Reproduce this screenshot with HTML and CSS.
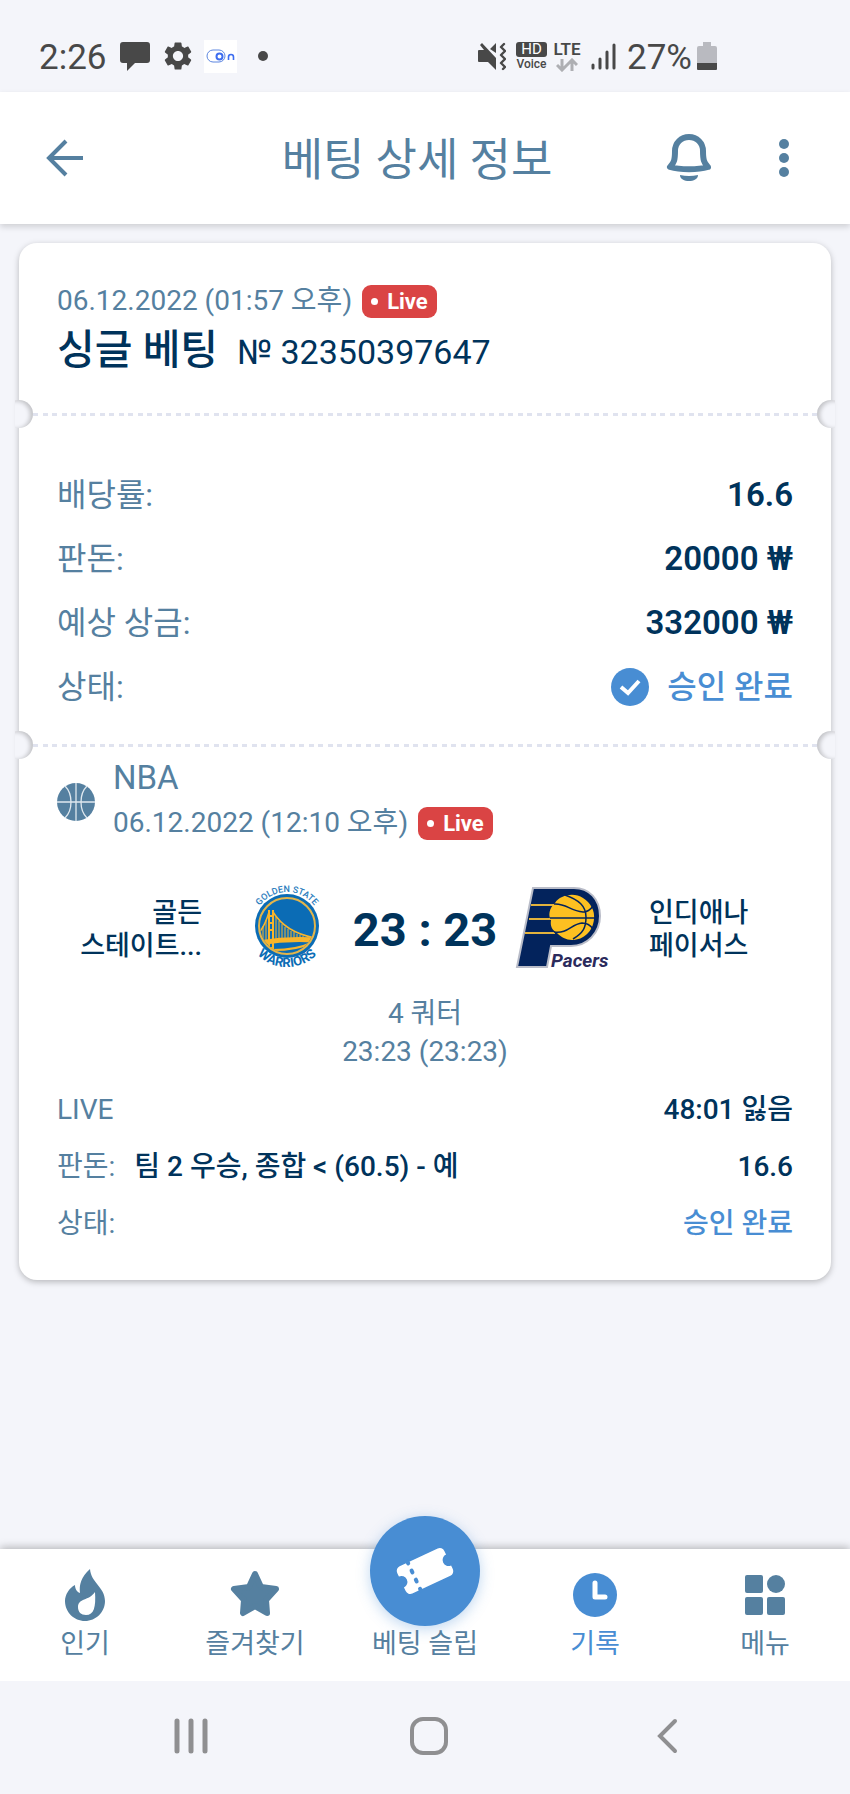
FILE: index.html
```html
<!DOCTYPE html>
<html lang="ko">
<head>
    <meta charset="UTF-8">
    <meta name="viewport" content="width=device-width, initial-scale=1">
    <title>베팅 상세 정보</title>
    <link rel="stylesheet" href="styles.css">
</head>
<body>
    <div class="status-bar">
        <div class="status-left">
            <span class="status-text">2:26</span>
            <svg class="icon-chat" width="30" height="30" viewBox="0 0 30 30"><path fill="#484848" d="M3 1h24a3 3 0 0 1 3 3v15a3 3 0 0 1-3 3H15l-8 8v-8H3a3 3 0 0 1-3-3V4a3 3 0 0 1 3-3z"/></svg>
            <svg class="icon-gear" width="34" height="34" viewBox="0 0 24 24"><path fill="#484848" d="M19.14 12.94c.04-.3.06-.61.06-.94 0-.32-.02-.64-.07-.94l2.03-1.58c.18-.14.23-.41.12-.61l-1.92-3.32c-.12-.22-.37-.29-.59-.22l-2.39.96c-.5-.38-1.03-.7-1.62-.94l-.36-2.54c-.04-.24-.24-.41-.48-.41h-3.84c-.24 0-.43.17-.47.41l-.36 2.54c-.59.24-1.13.57-1.62.94l-2.39-.96c-.22-.08-.47 0-.59.22L2.74 8.87c-.12.21-.08.47.12.61l2.03 1.58c-.05.3-.09.63-.09.94s.02.64.07.94l-2.03 1.58c-.18.14-.23.41-.12.61l1.92 3.32c.12.22.37.29.59.22l2.39-.96c.5.38 1.03.7 1.62.94l.36 2.54c.05.24.24.41.48.41h3.84c.24 0 .44-.17.47-.41l.36-2.54c.59-.24 1.13-.56 1.62-.94l2.39.96c.22.08.47 0 .59-.22l1.92-3.32c.12-.22.07-.47-.12-.61l-2.01-1.58zM12 15.6c-1.98 0-3.6-1.62-3.6-3.6s1.62-3.6 3.6-3.6 3.6 1.62 3.6 3.6-1.62 3.6-3.6 3.6z"/></svg>
            <svg class="icon-app" width="33" height="33" viewBox="0 0 33 33">
                <rect width="33" height="33" fill="#fff"/>
                <rect x="3" y="10" width="18" height="12" rx="6" fill="none" stroke="#5c86e0" stroke-width="1"/>
                <circle cx="15.500" cy="16.500" r="3" fill="none" stroke="#3d6df0" stroke-width="2"/>
                <path d="M24.500 20v-3a2.500 2.500 0 0 1 5 0v3" fill="none" stroke="#3d6df0" stroke-width="1.600"/>
            </svg>
            <span class="status-dot"></span>
        </div>
        <div class="status-right">
            <svg width="28" height="30" viewBox="0 0 28 30">
                <path fill="#484848" d="M1 9h5l-4-5 2-2 14 15v12l-8-8H1a1 1 0 0 1-1-1V10a1 1 0 0 1 1-1zM12 8l6-6v10z"/>
                <path fill="none" stroke="#484848" stroke-width="2.400" stroke-linecap="round" stroke-linejoin="round" d="M26 3l-3 3 4 4-4 4 4 4-4 4 4 4-2 2"/>
            </svg>
            <div class="hd-voice"><span class="hd">HD</span><span class="voice">Voice</span></div>
            <div class="lte">
                <span>LTE</span>
                <svg width="22" height="14" viewBox="0 0 22 14" fill="none" stroke="#aeafb3" stroke-width="3"><path d="M6 1v11M1 7l5 5 5-5M16 13V2M11 7l5-5 5 5"/></svg>
            </div>
            <svg width="26" height="28" viewBox="0 0 26 28" stroke="#484848" stroke-width="3" stroke-linecap="round"><path d="M2 23v3M9 17v9M16 10v16M23 3v23"/></svg>
            <span class="status-text battery-text">27%</span>
            <svg width="20" height="30" viewBox="0 0 20 30"><path fill="#b9bac0" d="M6 1h8v4h4a2 2 0 0 1 2 2v15H0V7a2 2 0 0 1 2-2h4z"/><path fill="#484848" d="M0 22h20v6a1 1 0 0 1-1 1H1a1 1 0 0 1-1-1z"/></svg>
        </div>
    </div>

    <header class="app-header">
        <button class="icon-button back-button" aria-label="뒤로">
            <svg width="40" height="40" viewBox="0 0 40 40" fill="none" stroke="#5580a0" stroke-width="4"><path d="M39 20H5M22 3L5 20l17 17"/></svg>
        </button>
        <h1>베팅 상세 정보</h1>
        <div class="header-actions">
            <button class="icon-button" aria-label="알림">
                <svg width="48" height="52" viewBox="0 0 48 52">
                    <path d="M24 5c-8 0-14 6-14 14c0 9-1 12-5 16c10 3 28 3 38 0c-4-4-5-7-5-16c0-8-6-14-14-14z" fill="none" stroke="#5580a0" stroke-width="6" stroke-linejoin="round"/>
                    <path d="M15 43q9 2 18 0c0 8-18 8-18 0z" fill="#5580a0"/>
                </svg>
            </button>
            <button class="icon-button" aria-label="더보기">
                <svg width="10" height="40" viewBox="0 0 10 40" fill="#5580a0"><circle cx="5" cy="6" r="5"/><circle cx="5" cy="20" r="5"/><circle cx="5" cy="34" r="5"/></svg>
            </button>
        </div>
    </header>

    <main>
        <article class="ticket">
            <section class="ticket-head">
                <div class="date-line">06.12.2022 (01:57 오후)<span class="live-badge">Live</span></div>
                <div class="title-line">
                    <h2>싱글 베팅</h2>
                    <span>№ 32350397647</span>
                </div>
            </section>

            <div class="divider"></div>

            <dl class="summary">
                <div><dt>배당률:</dt><dd>16.6</dd></div>
                <div><dt>판돈:</dt><dd>20000 ₩</dd></div>
                <div><dt>예상 상금:</dt><dd>332000 ₩</dd></div>
                <div>
                    <dt>상태:</dt>
                    <dd class="accepted">
                        <svg width="38" height="38" viewBox="0 0 38 38"><circle cx="19" cy="19" r="19" fill="#488dd3"/><path d="M10 19l7 6 11-12" fill="none" stroke="#fff" stroke-width="4"/></svg>
                        승인 완료
                    </dd>
                </div>
            </dl>

            <div class="divider"></div>

            <section class="match">
                <div class="league">
                    <svg width="38" height="38" viewBox="0 0 38 38">
                        <circle cx="19" cy="19" r="19" fill="#5580a0"/>
                        <path d="M19 0v38M0 19h38M8 3c8 8 8 24 0 32M30 3c-8 8-8 24 0 32" fill="none" stroke="#dfe8ef" stroke-width="1.300"/>
                    </svg>
                    <div>
                        <div class="league-name">NBA</div>
                        <div class="date-line">06.12.2022 (12:10 오후)<span class="live-badge">Live</span></div>
                    </div>
                </div>

                <div class="teams">
                    <div class="team-name home">골든 스테이트...</div>
                    <svg class="team-logo" width="66" height="82" viewBox="0 0 66 82">
                        <defs>
                            <path id="arc-top" d="M-1 39A34 34 0 0 1 67 39"/>
                            <path id="arc-bottom" d="M-9 38A42 42 0 0 0 75 38"/>
                            <clipPath id="disc"><circle cx="33" cy="39" r="27"/></clipPath>
                        </defs>
                        <circle cx="33" cy="39" r="32" fill="#0b6cb5"/>
                        <circle cx="33" cy="39" r="28" fill="#0b6cb5" stroke="#e3b54b" stroke-width="2"/>
                        <g clip-path="url(#disc)" stroke="#f9b52b" fill="none">
                            <path d="M15 23v42M19 23v42M15 29h4M15 36h4M15 43h4" stroke-width="2"/>
                            <path d="M19 25Q32 46 62 51M15 25Q11 39 4 47" stroke-width="1.500"/>
                            <path d="M22 30v23M25 34v19M28 37v16M31 40v13M34 42v11M37 44v9M40 45v8M43 47v6M46 48v5M49 49v3M12 33v20M9 39v14" stroke-width="1"/>
                            <path d="M4 56q29-5 58-3" stroke-width="5"/>
                            <path d="M19 63q24 0 38-7M4 61h15" stroke-width="2"/>
                        </g>
                        <text class="arc-golden"><textPath href="#arc-top" startOffset="50%">GOLDEN STATE</textPath></text>
                        <text class="arc-warriors"><textPath href="#arc-bottom" startOffset="50%">WARRIORS</textPath></text>
                    </svg>
                    <div class="score">23 : 23</div>
                    <svg class="team-logo" width="94" height="82" viewBox="0 0 94 82">
                        <path d="M17 1h41c15 0 26 11 26 28S71 59 55 59H35l-4 21H1z" fill="#03235c" stroke="#b9bcc8" stroke-width="2"/>
                        <path d="M15 18h25M13 32h25M9 46h30" stroke="#e2b23d" stroke-width="2"/>
                        <path d="M39 16C44 8 58 5 67 11c8 5 12 13 11 21c-1 12-10 21-22 21c-6 0-11-3-15-7c-5-3-7-7-6-13c-3-4-2-12 4-17z" fill="#fdc021"/>
                        <path d="M38 17c12-1 16 7 29 8c5 0 8-3 10-6M34 31h45M38 45c14 2 17-8 28-9c6 0 9 3 11 6M49 8c14 5 21 11 21 22s-3 16-13 22" fill="none" stroke="#03235c" stroke-width="1.500"/>
                        <text x="35" y="80" class="pacers-text">Pacers</text>
                    </svg>
                    <div class="team-name away">인디애나 페이서스</div>
                </div>

                <div class="period">4 쿼터<br>23:23 (23:23)</div>

                <dl class="event">
                    <div><dt>LIVE</dt><dd>48:01 잃음</dd></div>
                    <div><dt>판돈:</dt><dd class="pick">팀 2 우승, 종합 &lt; (60.5) - 예</dd><dd>16.6</dd></div>
                    <div><dt>상태:</dt><dd class="accepted">승인 완료</dd></div>
                </dl>
            </section>
        </article>
    </main>

    <nav class="bottom-nav">
        <a href="#">
            <svg width="52" height="52" viewBox="0 0 52 52">
                <path fill="#5580a0" fill-rule="evenodd" d="M31 0C22 8 20 16 21 24C18 23 16 20 16 16C10 19 6 26 6 32C6 43 15 52 26 52C37 52 46 43 46 32C46 18 32 14 31 0zM36 23C37 38 35 46 27 46C22 46 19 43 19 38C19 29 30 32 36 23z"/>
            </svg>
            <span>인기</span>
        </a>
        <a href="#">
            <svg width="52" height="52" viewBox="0 0 52 52"><path fill="#5580a0" stroke="#5580a0" stroke-width="6" stroke-linejoin="round" d="M26 5l6 13 15 2-10 11 1 13-12-7-12 7 1-13L5 20l15-2z"/></svg>
            <span>즐겨찾기</span>
        </a>
        <a href="#">
            <span class="slip-circle">
                <svg width="64" height="64" viewBox="-32 -32 64 64">
                    <g transform="rotate(-25)">
                        <path fill="#fff" d="M-21-15H21a5 5 0 0 1 5 5V-6a6 6 0 0 0 0 12V10a5 5 0 0 1-5 5H-21a5 5 0 0 1-5-5V6a6 6 0 0 0 0-12V-10a5 5 0 0 1 5-5z"/>
                        <path stroke="#488dd3" stroke-width="4" stroke-linecap="round" stroke-dasharray="2 8" d="M-12-16v34"/>
                    </g>
                </svg>
            </span>
            <span>베팅 슬립</span>
        </a>
        <a href="#" class="active">
            <svg width="52" height="52" viewBox="0 0 52 52"><circle cx="26" cy="26" r="22" fill="#488dd3"/><path d="M26 14v14h10" fill="none" stroke="#fff" stroke-width="5" stroke-linecap="round" stroke-linejoin="round"/></svg>
            <span>기록</span>
        </a>
        <a href="#">
            <svg width="52" height="52" viewBox="0 0 52 52" fill="#5580a0"><rect x="6" y="6" width="18" height="18" rx="2"/><circle cx="37" cy="15" r="9"/><rect x="6" y="28" width="18" height="18" rx="2"/><rect x="28" y="28" width="18" height="18" rx="2"/></svg>
            <span>메뉴</span>
        </a>
    </nav>

    <div class="system-bar">
        <button class="icon-button" aria-label="최근 앱"><svg width="36" height="38" viewBox="0 0 36 38" stroke="#8f8f91" stroke-width="5" stroke-linecap="round"><path d="M4 4v30M18 4v30M32 4v30"/></svg></button>
        <button class="icon-button" aria-label="홈"><svg width="38" height="38" viewBox="0 0 38 38"><rect x="2" y="2" width="34" height="34" rx="11" fill="none" stroke="#8f8f91" stroke-width="4"/></svg></button>
        <button class="icon-button" aria-label="이전"><svg width="22" height="38" viewBox="0 0 22 38" fill="none" stroke="#8f8f91" stroke-width="4" stroke-linecap="round" stroke-linejoin="miter"><path d="M19 4L4 19l15 15"/></svg></button>
    </div>
</body>
</html>
```
FILE: styles.css
```css
* {
    box-sizing: border-box;
}
body {
    font-family: Roboto, "Noto Sans CJK KR", sans-serif;
    background-color: #f4f5fa;
    color: #5580a0;
    display: flex;
    flex-direction: column;
    min-height: 100vh;
    margin: 0;
}
h1, h2, dl, dd {
    margin: 0;
}
svg {
    display: block;
    flex-shrink: 0;
}
.icon-button {
    display: flex;
    justify-content: center;
    align-items: center;
    width: 64px;
    height: 64px;
    padding: 0;
    border: none;
    background: none;
    cursor: pointer;
}

/* status bar */
.status-bar {
    display: flex;
    justify-content: space-between;
    height: 92px;
    padding: 20px 133px 0 39px;
    color: #484848;
}
.status-left, .status-right {
    display: flex;
    align-items: center;
}
.status-text {
    padding-top: 2px;
    font-size: 35px;
}
.icon-chat {
    margin-left: 13px;
}
.icon-gear {
    margin-left: 11px;
}
.icon-app {
    margin-left: 9px;
}
.status-dot {
    width: 10px;
    height: 10px;
    margin-left: 21px;
    border-radius: 50%;
    background-color: #484848;
}
.status-right {
    gap: 10px;
}
.hd-voice {
    display: flex;
    flex-direction: column;
    align-items: center;
    width: 31px;
}
.hd {
    width: 31px;
    border-radius: 3px;
    background-color: #484848;
    color: #fff;
    font-size: 15px;
    line-height: 15px;
    text-align: center;
}
.voice {
    font-size: 12px;
    line-height: 14px;
    font-weight: 500;
}
.lte {
    display: flex;
    flex-direction: column;
    align-items: center;
    width: 28px;
    margin-left: -4px;
    font-size: 17px;
    line-height: 17px;
    font-weight: 600;
}
.battery-text {
    margin-right: -5px;
}

/* header */
.app-header {
    display: grid;
    grid-template-columns: 177px 1fr 193px;
    align-items: center;
    height: 132px;
    background-color: #fff;
    box-shadow: 0 3px 6px rgba(0, 0, 0, 0.15);
}
.app-header h1 {
    padding-top: 6px;
    font-size: 45px;
    line-height: 60px;
    font-weight: 400;
    text-align: center;
    white-space: nowrap;
}
.back-button {
    margin-left: 32px;
}
.header-actions {
    display: flex;
    gap: 31px;
}

/* ticket */
main {
    flex: 1;
    padding: 19px 19px 40px;
}
.ticket {
    border-radius: 18px;
    background-color: #fff;
    box-shadow: 0 2px 6px rgba(0, 0, 0, 0.25);
}
.ticket-head {
    padding: 41px 38px 35px;
}
.date-line {
    display: flex;
    align-items: center;
    gap: 10px;
    font-size: 28px;
    line-height: 34px;
}
.live-badge {
    display: flex;
    align-items: center;
    gap: 9px;
    padding: 0 9px;
    border-radius: 9px;
    background-color: #da4444;
    color: #fff;
    font-size: 22px;
    line-height: 33px;
    font-weight: 700;
}
.live-badge::before {
    content: "";
    width: 7px;
    height: 7px;
    border-radius: 50%;
    background-color: #fff;
}
.title-line {
    display: flex;
    align-items: baseline;
    gap: 19px;
    margin-top: 7px;
    color: #00335b;
    font-size: 34px;
    line-height: 51px;
}
.title-line h2 {
    font-size: 41px;
    font-weight: 500;
}
.divider {
    position: relative;
    height: 3px;
    margin: 0 14px;
    background: repeating-linear-gradient(90deg, #e0e3ef 0 5px, transparent 5px 10px, #e0e3ef 10px 15px, transparent 15px 19px);
}
/* punched holes at both ends of the tear line */
.divider::before, .divider::after {
    content: "";
    position: absolute;
    top: -13px;
    width: 28px;
    height: 28px;
    border-radius: 50%;
    background-color: #f4f5fa;
}
.divider::before {
    left: -28px;
    box-shadow: inset -3px 1px 4px rgba(0, 0, 0, 0.2);
    clip-path: inset(0 0 0 10px);
}
.divider::after {
    right: -28px;
    box-shadow: inset 3px 1px 4px rgba(0, 0, 0, 0.2);
    clip-path: inset(0 10px 0 0);
}
.summary {
    padding: 47px 38px 25px;
    font-size: 32px;
    line-height: 64px;
}
.summary div, .event div {
    display: flex;
}
dd {
    margin-left: auto;
    color: #00335b;
    font-weight: 500;
}
.summary dd {
    font-size: 33px;
    font-weight: 600;
}
.summary .accepted {
    display: flex;
    align-items: center;
    gap: 18px;
    font-size: 32px;
    font-weight: 500;
}
dd.accepted {
    color: #488dd3;
}

/* match */
.match {
    padding: 10px 38px 28px;
}
.league {
    display: flex;
    align-items: center;
    gap: 18px;
}
.league-name {
    font-size: 33px;
    line-height: 42px;
}
.league .date-line {
    line-height: 48px;
}
.league .live-badge {
    line-height: 33px;
}
.teams {
    display: grid;
    grid-template-columns: 1fr 100px 176px 100px 1fr;
    align-items: center;
    margin-top: 40px;
    color: #00335b;
}
.team-name {
    padding-top: 4px;
    font-size: 27px;
    line-height: 33px;
    font-weight: 500;
    word-break: keep-all;
}
.home {
    padding-right: 35px;
    text-align: right;
}
.away {
    padding-left: 36px;
}
.team-logo {
    justify-self: center;
    overflow: visible;
}
.score {
    padding-top: 2px;
    font-size: 47px;
    font-weight: 700;
    text-align: center;
}
.arc-golden {
    fill: #2a7cbd;
    font-size: 9px;
    font-weight: 500;
    text-anchor: middle;
}
.arc-warriors {
    fill: #0b6cb5;
    font-size: 13px;
    font-weight: 700;
    text-anchor: middle;
}
.pacers-text {
    fill: #2b2a5c;
    font-size: 19px;
    font-weight: 700;
    font-style: italic;
}
.period {
    margin-top: 26px;
    font-size: 28px;
    line-height: 38px;
    text-align: center;
}
.event {
    margin-top: 10px;
    font-size: 28px;
    line-height: 57px;
}
.event .pick {
    margin-left: 19px;
}

/* bottom navigation */
.bottom-nav {
    display: grid;
    grid-template-columns: repeat(5, 1fr);
    grid-template-rows: 100%;
    height: 132px;
    background-color: #fff;
    box-shadow: 0 -2px 8px rgba(0, 0, 0, 0.25);
    clip-path: inset(-60px 0 0 0);
}
.bottom-nav a {
    display: flex;
    flex-direction: column;
    justify-content: flex-end;
    align-items: center;
    gap: 5px;
    padding-bottom: 19px;
    color: #5580a0;
    font-size: 27px;
    line-height: 36px;
    text-decoration: none;
}
.bottom-nav .active {
    color: #488dd3;
}
.slip-circle {
    display: flex;
    justify-content: center;
    align-items: center;
    flex-shrink: 0;
    width: 110px;
    height: 110px;
    margin-bottom: -5px;
    border-radius: 50%;
    background-color: #488dd3;
    box-shadow: 0 3px 14px rgba(72, 141, 211, 0.35);
}

/* system buttons */
.system-bar {
    display: grid;
    grid-template-columns: repeat(3, 1fr);
    place-items: center;
    height: 113px;
    padding: 0 64px 4px 72px;
}
```
